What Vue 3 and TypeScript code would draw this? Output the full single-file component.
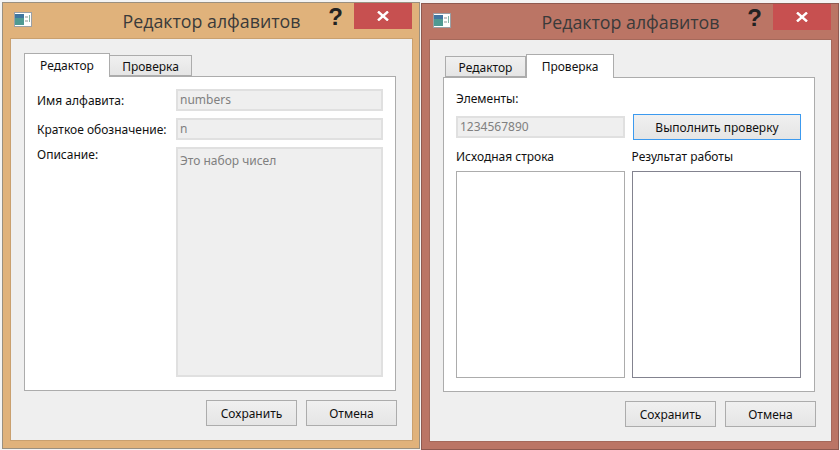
<script setup lang="ts">
const title = 'Редактор алфавитов'
</script>

<template>
  <div class="desk">
    <section class="win win-a">
      <header class="bar">
        <svg class="app-icon" width="18" height="15" viewBox="0 0 18 15">
          <rect x="0.5" y="0.5" width="17" height="14" fill="#fff" stroke="#9aa0a6" />
          <rect x="1" y="2" width="9" height="11" fill="#4f9a92" />
          <rect x="1" y="2" width="9" height="4" fill="#3f76a0" />
          <rect x="11" y="4" width="3" height="2" fill="#c8c8c8" />
          <rect x="11" y="8" width="3" height="2" fill="#c8c8c8" />
          <rect x="15" y="3" width="1" height="7" fill="#7fb5a5" />
        </svg>
        <span class="title">{{ title }}</span>
        <span class="help">?</span>
        <span class="close"><svg width="12" height="10" viewBox="0 0 12 10"><path d="M1 0.500l10 9M11 0.500l-10 9" fill="none" stroke="#fff" stroke-width="2.400" /></svg></span>
      </header>
      <div class="client">
        <div class="tabs">
          <div class="tab on">Редактор</div>
          <div class="tab">Проверка</div>
        </div>
        <div class="pane form">
          <label>Имя алфавита:</label>
          <div class="input">numbers</div>
          <label>Краткое обозначение:</label>
          <div class="input">n</div>
          <label class="top">Описание:</label>
          <div class="input area">Это набор чисел</div>
        </div>
        <div class="actions">
          <button>Сохранить</button>
          <button>Отмена</button>
        </div>
      </div>
    </section>

    <section class="win win-b">
      <header class="bar">
        <svg class="app-icon" width="18" height="15" viewBox="0 0 18 15">
          <rect x="0.5" y="0.5" width="17" height="14" fill="#fff" stroke="#9aa0a6" />
          <rect x="1" y="2" width="9" height="11" fill="#4f9a92" />
          <rect x="1" y="2" width="9" height="4" fill="#3f76a0" />
          <rect x="11" y="4" width="3" height="2" fill="#c8c8c8" />
          <rect x="11" y="8" width="3" height="2" fill="#c8c8c8" />
          <rect x="15" y="3" width="1" height="7" fill="#7fb5a5" />
        </svg>
        <span class="title">{{ title }}</span>
        <span class="help">?</span>
        <span class="close"><svg width="12" height="10" viewBox="0 0 12 10"><path d="M1 0.500l10 9M11 0.500l-10 9" fill="none" stroke="#fff" stroke-width="2.400" /></svg></span>
      </header>
      <div class="client">
        <div class="tabs">
          <div class="tab">Редактор</div>
          <div class="tab on">Проверка</div>
        </div>
        <div class="pane check">
          <label class="elems">Элементы:</label>
          <div class="check-row">
            <div class="input">1234567890</div>
            <button class="focus">Выполнить проверку</button>
          </div>
          <div class="cols">
            <div class="col">
              <label>Исходная строка</label>
              <div class="box"></div>
            </div>
            <div class="col">
              <label>Результат работы</label>
              <div class="box dark"></div>
            </div>
          </div>
        </div>
        <div class="actions">
          <button>Сохранить</button>
          <button>Отмена</button>
        </div>
      </div>
    </section>
  </div>
</template>

<style>
html, body {
  margin: 0;
  background: #f4f4f4;
}
</style>

<style scoped>
.desk {
  display: flex;
  width: 840px;
  height: 450px;
  overflow: hidden;
  font-family: "Noto Sans", sans-serif;
  font-size: 12px;
  color: #111;
}

.win {
  flex-shrink: 0;
  box-sizing: border-box;
  width: 418px;
  height: 447px;
  display: flex;
  flex-direction: column;
  padding: 0 7px 8px 8px;
  border: 1px solid #9a9080;
}

.win-a {
  margin: 2px 0 0 2px;
  background: #e0b27b;
}

.win-b {
  margin: 3px 0 0 1px;
  background: #bb7565;
  border-color: #8f5a50;
}

.bar {
  height: 36px;
  flex-shrink: 0;
  position: relative;
  display: flex;
  justify-content: center;
  align-items: flex-start;
}

.app-icon {
  position: absolute;
  left: 3px;
  top: 9px;
}

.title {
  font-family: "Open Sans", sans-serif;
  font-size: 17.8px;
  line-height: 24px;
  margin-top: 6px;
  color: #3a3a3a;
}

.help {
  position: absolute;
  right: 69px;
  top: 2px;
  font-family: "Liberation Sans", sans-serif;
  font-weight: 700;
  font-size: 24px;
  line-height: 24px;
  color: #222;
}

.close {
  position: absolute;
  right: 0;
  top: 0;
  width: 58px;
  height: 26px;
  background: #c75050;
  display: flex;
  align-items: center;
  justify-content: center;
}

.client {
  flex: 1;
  display: flex;
  flex-direction: column;
  background: #efefef;
  padding: 14px 16px 0 13px;
}

.win-a .client {
  box-shadow: 0 0 0 1px #c9a06f;
}

.win-b .client {
  box-shadow: 0 0 0 1px #a5695b;
}

.tabs {
  display: flex;
  height: 23px;
  position: relative;
  z-index: 1;
}

.tab {
  box-sizing: border-box;
  width: 82px;
  height: 21px;
  margin-top: 2px;
  border: 1px solid #acacac;
  border-left-width: 0;
  background: linear-gradient(#f0f0f0, #e5e5e5);
  text-align: center;
  line-height: 22px;
}

.tab:first-child {
  border-left-width: 1px;
}

.tab.on {
  width: 86px;
  height: 24px;
  margin-top: 0;
  background: #fff;
  border-left-width: 1px;
  border-bottom: 0;
  line-height: 24px;
}

.win-b .tab {
  width: 81px;
}

.win-b .tab:first-child {
  margin-left: 2px;
}

.win-b .tab.on {
  width: 88px;
}

.pane {
  box-sizing: border-box;
  height: 315px;
  border: 1px solid #acacac;
  background: #fff;
}

.form {
  display: grid;
  grid-template-columns: 133px 207px;
  grid-template-rows: 22px 22px 230px;
  gap: 7px 6px;
  padding: 12px 0 0 12px;
  align-items: center;
}

.form .top {
  align-self: start;
  line-height: 16px;
}

.input {
  box-sizing: border-box;
  height: 22px;
  border: 2px solid #e0e0e0;
  background: #efefef;
  color: #808080;
  line-height: 18px;
  padding: 0 2px;
}

.area {
  height: 230px;
  padding-top: 3px;
}

.check {
  padding: 13px 13px 0 12px;
}

.elems {
  display: block;
  line-height: 16px;
}

.check-row {
  display: flex;
  align-items: center;
  gap: 8px;
  margin-top: 7px;
}

.check-row .input {
  width: 169px;
}

.check-row button {
  width: 168px;
}

.cols {
  display: flex;
  gap: 7px;
  margin-top: 9px;
}

.col {
  width: 169px;
}

.col + .col {
  width: 170px;
}

.col label {
  display: block;
  line-height: 16px;
  margin-bottom: 6px;
}

.box {
  box-sizing: border-box;
  height: 207px;
  border: 1px solid #acacac;
  background: #fff;
}

.box.dark {
  border-color: #83838f;
}

.actions {
  display: flex;
  justify-content: flex-end;
  gap: 9px;
  margin: 9px -1px 0 0;
}

button {
  box-sizing: border-box;
  width: 91px;
  height: 26px;
  padding: 0;
  border: 1px solid #acacac;
  background: linear-gradient(#f0f0f0, #e5e5e5);
  font: inherit;
  color: #111;
}

button.focus {
  border-color: #3c9aef;
}
</style>
